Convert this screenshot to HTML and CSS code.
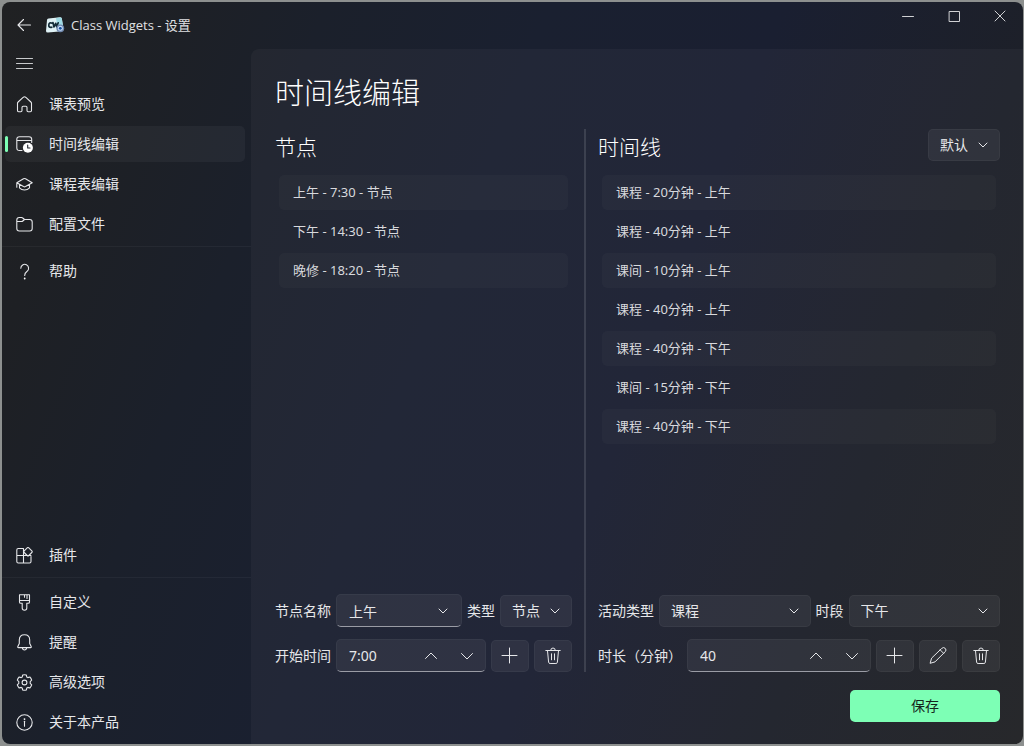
FILE: index.html
```html
<!DOCTYPE html>
<html lang="zh-CN">
<head>
<meta charset="utf-8">
<title>Class Widgets - 设置</title>
<link rel="stylesheet" href="styles.css">
</head>
<body>
<svg class="defs" aria-hidden="true">
  <symbol id="chev-down" viewBox="0 0 12 12"><path d="M2 4l4 4 4-4"/></symbol>
  <symbol id="spin-up" viewBox="0 0 14 14"><path d="M1.500 9.500L7 4l5.500 5.500"/></symbol>
  <symbol id="spin-down" viewBox="0 0 14 14"><path d="M1.500 4.500L7 10l5.500-5.500"/></symbol>
  <symbol id="plus" viewBox="0 0 18 18"><path d="M8.500 1v15M1 8.500h15"/></symbol>
  <symbol id="trash" viewBox="0 0 18 18"><path d="M1.800 3.500h14.400M6.700 3.300a2.300 2.300 0 0 1 4.600 0M3.500 3.700l1.100 11.500a1.500 1.500 0 0 0 1.500 1.300h5.800a1.500 1.500 0 0 0 1.500-1.300l1.100-11.500M7.500 6.800v6M10.500 6.800v6"/></symbol>
  <symbol id="pencil" viewBox="0 0 18 18"><path d="M12.800 1.300a2.300 2.300 0 0 1 3.400 3.400L6 14.900l-4.900 1.400L2.500 11.500zM11.200 2.900l3.400 3.400"/></symbol>
</svg>
<div class="window">
  <header class="titlebar">
    <button class="back" type="button" aria-label="返回"><svg class="icon" viewBox="0 0 16 16"><path d="M14.500 8H2M7.500 2.500L2 8l5.500 5.500"/></svg></button>
    <svg class="logo" viewBox="0 0 20 16" aria-hidden="true">
      <path fill="#dff1f5" d="M2 3Q2 1.700 3.500 1.500L15 .3q1.500-.1 1.800 1.200L18.500 12q.2 2-1.500 2.200L3 15.500q-2 .1-2-1.500z"/>
      <path fill="#9fdbe5" d="M11 1l4-.6q1.500-.1 1.800 1.200L18 9l-6-1z"/>
      <path fill="none" stroke="#142c38" stroke-width="1.700" d="M7.300 6.200Q4 5 3.800 8t3 2.200M8 5.700l1 4.300 1.700-3.700 1 3.500 1.500-4"/>
      <circle cx="15.300" cy="11.300" r="3.900" fill="#7088ad"/><circle cx="15.300" cy="11.300" r="2.500" fill="#c5dcfa"/><circle cx="15.300" cy="11.300" r="1.400" fill="#174f9b"/>
    </svg>
    <span class="caption">Class Widgets - 设置</span>
    <div class="winbtns">
      <button type="button" aria-label="最小化"><svg viewBox="0 0 12 12"><path d="M.500 6.500h11"/></svg></button>
      <button type="button" aria-label="最大化"><svg viewBox="0 0 12 12"><path d="M1.500 1.500h10v10h-10z"/></svg></button>
      <button type="button" aria-label="关闭"><svg viewBox="0 0 12 12"><path d="M1 1l10 10M11 1L1 11"/></svg></button>
    </div>
  </header>
  <div class="body">
    <nav class="sidebar">
      <button class="item menu" type="button" aria-label="菜单"><svg class="icon" viewBox="0 0 17 17"><path d="M.500 2.500h16M.500 7.500h16M.500 12.500h16"/></svg></button>
      <a class="item" href="#"><svg class="icon" viewBox="0 0 17 17"><path d="M1.500 7.300q0-.8.600-1.300l5.300-4.800q1.100-.9 2.200 0L14.900 6q.6.500.6 1.300v7.200q0 1.200-1.200 1.200h-2.100q-1.200 0-1.200-1.200v-3q0-1.200-1.200-1.200H7.200Q6 10.300 6 11.500v3q0 1.200-1.200 1.200H2.700q-1.200 0-1.200-1.200z"/></svg>课表预览</a>
      <a class="item active" href="#"><svg class="icon" viewBox="0 0 17 17"><path d="M6 14.500H3.500Q.8 14.500.8 11.800V3.500Q.8.800 3.500.8h9.500q2.700 0 2.700 2.700v3M.8 4.500h14.900"/><circle class="solid" cx="11.900" cy="11.700" r="5"/><path class="hand" d="M11.700 9v3H14"/></svg>时间线编辑</a>
      <a class="item" href="#"><svg class="icon" viewBox="0 0 17 17"><path d="M.8 6.700l6.700-3.900q1-.5 2 0l6.700 3.900-6.700 3.900q-1 .5-2 0zM.8 7v4.200M3.500 8.500v3.300q2 2.200 5 2.200t5-2.200V8.500"/></svg>课程表编辑</a>
      <a class="item" href="#"><svg class="icon" viewBox="0 0 17 17"><path d="M.8 4q0-2.500 2.500-2.500H5.500q.8 0 1.300.5L8.500 3.500h5.200q2.500 0 2.500 2.500v6.500q0 2.500-2.500 2.500H3.300Q.8 15 .8 12.500zM.8 5.500h4.700q.8 0 1.300-.5l1.700-1.500"/></svg>配置文件</a>
      <hr>
      <a class="item" href="#"><svg class="icon" viewBox="0 0 17 17"><path d="M4.800 5.200a3.900 3.900 0 1 1 6.300 3.100Q8.700 10 8.700 12.500"/><circle class="solid" cx="8.700" cy="15.500" r=".9"/></svg>帮助</a>
      <div class="spacer"></div>
      <a class="item" href="#"><svg class="icon" viewBox="0 0 17 17"><path d="M7.500 1.500H2.300Q.8 1.500.8 3v11.500Q.8 16 2.300 16h11.200q1.500 0 1.500-1.500V9.500M.8 8.500h14.200M7.500 1.500V16M11.200.9q.8-.8 1.600 0l3 3q.8.800 0 1.600l-3 3q-.8.800-1.600 0l-3-3q-.8-.8 0-1.600z"/></svg>插件</a>
      <hr>
      <a class="item" href="#"><svg class="icon" viewBox="0 0 17 17"><path d="M3.500.8h10V8q0 1.300-1.300 1.300h-1.400V14q0 2.200-2.300 2.200T6.200 14V9.300H4.800Q3.500 9.300 3.500 8zM3.500 6.500h10M8.500.8v2.500M11 .8v3.700"/></svg>自定义</a>
      <a class="item" href="#"><svg class="icon" viewBox="0 0 17 17"><path d="M8.500.8q5.200 0 5.200 5.200v3.500l1.500 3.100q.3 1-.7 1h-12q-1 0-.7-1l1.500-3.100V6Q3.300.8 8.500.8zM6.300 13.700q.3 2.300 2.200 2.300t2.200-2.300"/></svg>提醒</a>
      <a class="item" href="#"><svg class="icon" viewBox="0 0 17 17"><path d="M6.700 1q1.800-.5 3.600 0l.5 2 1 .6 2-.6q1.300 1.300 1.900 3.100L14.200 7.600v1.800l1.500 1.500q-.6 1.800-1.900 3.100l-2-.6-1 .6-.5 2q-1.800.5-3.600 0l-.5-2-1-.6-2 .6Q1.900 12.700 1.300 10.900l1.500-1.500V7.600L1.300 6.100Q1.900 4.300 3.200 3l2 .6 1-.6z"/><circle cx="8.500" cy="8.500" r="2.400"/></svg>高级选项</a>
      <a class="item" href="#"><svg class="icon" viewBox="0 0 17 17"><circle cx="8.500" cy="8.500" r="7.700"/><path d="M8.500 7.300v5"/><circle class="solid" cx="8.500" cy="5.100" r=".9"/></svg>关于本产品</a>
    </nav>
    <main class="page">
      <h1>时间线编辑</h1>
      <div class="columns">
        <section class="col nodes">
          <div class="head"><h2>节点</h2></div>
          <ul class="list">
            <li>上午 - 7:30 - 节点</li>
            <li>下午 - 14:30 - 节点</li>
            <li>晚修 - 18:20 - 节点</li>
          </ul>
          <div class="row">
            <label for="node-name">节点名称</label>
            <div class="field edit grow"><input id="node-name" type="text" value="上午"><button class="drop" type="button" aria-label="展开"><svg class="chev"><use href="#chev-down"/></svg></button></div>
            <label for="node-type">类型</label>
            <div class="field select small"><select id="node-type"><option>节点</option></select><svg class="chev"><use href="#chev-down"/></svg></div>
          </div>
          <div class="row">
            <label for="start">开始时间</label>
            <div class="field edit grow"><input id="start" type="text" value="7:00"><button class="spin" type="button" aria-label="增加"><svg><use href="#spin-up"/></svg></button><button class="spin" type="button" aria-label="减少"><svg><use href="#spin-down"/></svg></button></div>
            <button class="tool" type="button" aria-label="添加"><svg><use href="#plus"/></svg></button>
            <button class="tool" type="button" aria-label="删除"><svg><use href="#trash"/></svg></button>
          </div>
        </section>
        <div class="divider"></div>
        <section class="col timeline">
          <div class="head"><h2>时间线</h2>
            <div class="field select small"><select aria-label="时间线"><option>默认</option></select><svg class="chev"><use href="#chev-down"/></svg></div>
          </div>
          <ul class="list">
            <li>课程 - 20分钟 - 上午</li>
            <li>课程 - 40分钟 - 上午</li>
            <li>课间 - 10分钟 - 上午</li>
            <li>课程 - 40分钟 - 上午</li>
            <li>课程 - 40分钟 - 下午</li>
            <li>课间 - 15分钟 - 下午</li>
            <li>课程 - 40分钟 - 下午</li>
          </ul>
          <div class="row">
            <label for="kind">活动类型</label>
            <div class="field select grow"><select id="kind"><option>课程</option></select><svg class="chev"><use href="#chev-down"/></svg></div>
            <label for="part">时段</label>
            <div class="field select grow"><select id="part"><option>下午</option></select><svg class="chev"><use href="#chev-down"/></svg></div>
          </div>
          <div class="row">
            <label for="len">时长（分钟）</label>
            <div class="field edit grow"><input id="len" type="text" value="40"><button class="spin" type="button" aria-label="增加"><svg><use href="#spin-up"/></svg></button><button class="spin" type="button" aria-label="减少"><svg><use href="#spin-down"/></svg></button></div>
            <button class="tool" type="button" aria-label="添加"><svg><use href="#plus"/></svg></button>
            <button class="tool" type="button" aria-label="编辑"><svg><use href="#pencil"/></svg></button>
            <button class="tool" type="button" aria-label="删除"><svg><use href="#trash"/></svg></button>
          </div>
        </section>
      </div>
      <button class="save" type="button">保存</button>
    </main>
  </div>
</div>
</body>
</html>
```
FILE: styles.css
```css
* { box-sizing: border-box; }
body {
  margin: 0;
  padding: 2px 1px 2px 2px;
  height: 100vh;
  background: #8d908f;
  color: #e6e7ea;
  font: 14px/20px "Noto Sans", "Noto Sans CJK SC", sans-serif;
}
button, input, select { font: inherit; color: inherit; background: none; border: 0; margin: 0; padding: 0; outline: none; }
svg { display: block; fill: none; stroke: currentColor; stroke-linecap: round; stroke-linejoin: round; }
.defs { position: absolute; width: 0; height: 0; }
.window {
  height: 100%;
  display: flex;
  flex-direction: column;
  border-radius: 8px;
  overflow: hidden;
  background: linear-gradient(111deg, #202123 0%, #1e2024 10%, #1b202b 25%, #1a2030 42%, #1a1f31 60%, #1d2029 80%, #202124 100%);
}
.titlebar { display: flex; align-items: center; height: 47px; flex: none; padding: 0 0 2px 14px; }
.back { width: 16px; height: 16px; }
.back .icon { width: 16px; height: 16px; }
.logo { width: 20px; height: 16px; margin: 0 6px 0 13px; stroke: none; }
.caption { flex: 1; font-size: 13px; font-family: "Open Sans", "Noto Sans CJK SC", sans-serif; color: #e0e1e3; }
.winbtns { display: flex; align-self: flex-start; }
.winbtns button { width: 46px; height: 28px; display: grid; place-items: center; color: #d0d1d4; }
.winbtns svg { width: 12px; height: 12px; }
.body { flex: 1; display: flex; min-height: 0; }
.sidebar { width: 249px; flex: none; display: flex; flex-direction: column; gap: 4px; padding: 0 0 4px; margin-top: -3px; }
.item {
  position: relative;
  display: flex;
  align-items: center;
  gap: 16px;
  height: 36px;
  flex: none;
  margin: 0 6px 0 3px;
  padding: 0 11px;
  border-radius: 5px;
  color: #e6e7ea;
  text-decoration: none;
}
.menu { color: #c8cacc; }
.item .icon { width: 17px; height: 17px; }
.icon { stroke-width: 1.1; }
.icon .solid { fill: #fff; stroke: none; }
.icon .hand { stroke: #20242d; }
.active { background: rgba(255, 255, 255, .045); }
.active::before { content: ""; position: absolute; left: 0; top: 10px; width: 3px; height: 16px; border-radius: 2px; background: #7dffb5; }
.sidebar hr { width: 100%; height: 1px; border: 0; margin: 0 0 2px; background: rgba(255, 255, 255, .045); flex: none; }
.spacer { flex: 1; }
.page {
  flex: 1;
  min-width: 0;
  display: flex;
  flex-direction: column;
  padding: 24px 23px 22px 24px;
  border-radius: 8px 0 0;
  background: rgba(255, 255, 255, .035);
}
h1 { margin: 0 0 16px; font-size: 29px; line-height: 40px; font-weight: 300; color: #fff; }
h2 { margin: 0; font-size: 21px; line-height: 32px; font-weight: 300; color: #fff; }
.columns { flex: 1; display: flex; gap: 12px; min-height: 0; }
.divider { width: 2px; background: rgba(255, 255, 255, .12); }
.col { min-width: 0; display: flex; flex-direction: column; gap: 12px; }
.nodes { flex: 297 1 0; }
.timeline { flex: 402 1 0; }
.head { display: flex; justify-content: space-between; align-items: flex-end; height: 34px; }
.head .field { align-self: flex-start; }
.list { flex: 1; list-style: none; margin: 0; padding: 0 4px; font-size: 13px; color: #d8d9dd; }
.list li { height: 35px; line-height: 35px; margin-bottom: 4px; padding: 0 14px; border-radius: 5px; }
.list li:nth-child(odd) { background: rgba(255, 255, 255, .025); }
.row { display: flex; align-items: center; gap: 5px; height: 33px; }
.row label { flex: none; }
.field {
  display: flex;
  align-items: center;
  height: 32px;
  min-width: 0;
  background: rgba(255, 255, 255, .06);
  border: 1px solid rgba(255, 255, 255, .04);
  border-radius: 5px;
}
.edit { height: 33px; border-bottom-color: #9a9ca5; }
.grow { flex: 1 1 0; }
.small { width: 72px; flex: none; }
.field input { flex: 1; min-width: 0; height: 100%; padding-left: 12px; }
.drop { width: 36px; height: 100%; display: grid; place-items: center; }
.spin { width: 36px; height: 100%; display: grid; place-items: center; }
.spin svg { width: 14px; height: 14px; }
.chev { width: 12px; height: 12px; }
.select { display: grid; }
.select select { grid-area: 1 / 1; appearance: none; width: 100%; height: 30px; padding: 0 28px 0 11px; }
.select .chev { grid-area: 1 / 1; justify-self: end; margin-right: 10px; pointer-events: none; }
.tool {
  width: 38px;
  height: 32px;
  flex: none;
  display: grid;
  place-items: center;
  background: rgba(255, 255, 255, .06);
  border: 1px solid rgba(255, 255, 255, .04);
  border-radius: 5px;
}
.tool svg { width: 18px; height: 18px; }
.save { align-self: flex-end; width: 150px; height: 32px; margin-top: 18px; border-radius: 5px; background: #7dffb5; color: #14241c; }
```
